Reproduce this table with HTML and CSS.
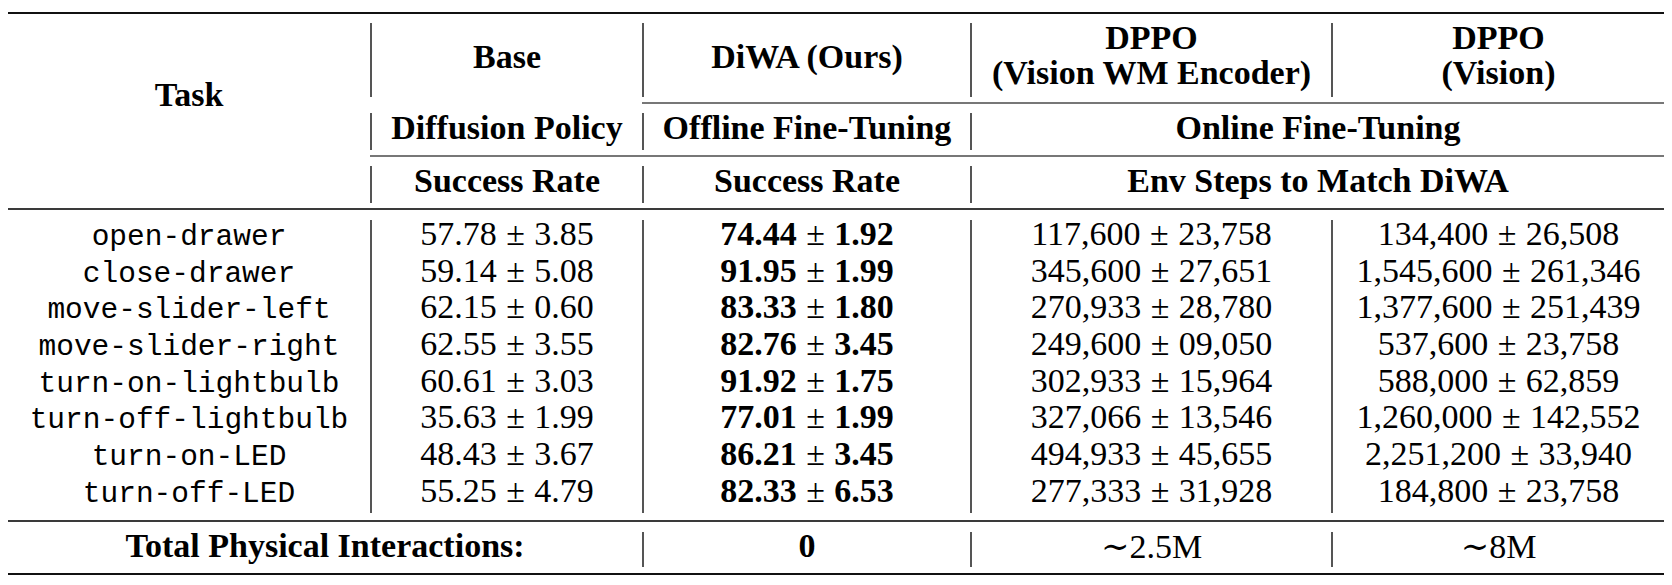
FILE: index.html
```html
<!DOCTYPE html>
<html>
<head>
<meta charset="utf-8">
<link rel="stylesheet" href="styles.css">
</head>
<body>
<div class="table">
  <div class="rule-heavy"></div>
  <div class="cols head">
    <div class="task-h">Task</div>
    <div class="hc r1 c2">Base</div>
    <div class="hc r1 c3">DiWA (Ours)</div>
    <div class="hc r1 c4"><div class="two">DPPO<br>(Vision WM Encoder)</div></div>
    <div class="hc r1 c5"><div class="two">DPPO<br>(Vision)</div></div>
    <div class="cmid cm1"></div>
    <div class="hc r2 c2">Diffusion Policy</div>
    <div class="hc r2 c3">Offline Fine-Tuning</div>
    <div class="hc r2 c45">Online Fine-Tuning</div>
    <div class="cmid cm2"></div>
    <div class="hc r3 c2">Success Rate</div>
    <div class="hc r3 c3">Success Rate</div>
    <div class="hc r3 c45">Env Steps to Match DiWA</div>
  </div>
  <div class="rule-mid"></div>
  <div class="cols body">
    <div class="task">open-drawer</div>
    <div class="c">57.78<span class="pm">±</span>3.85</div>
    <div class="c"><b>74.44</b><span class="pm">±</span><b>1.92</b></div>
    <div class="c">117,600<span class="pm">±</span>23,758</div>
    <div class="c">134,400<span class="pm">±</span>26,508</div>

    <div class="task">close-drawer</div>
    <div class="c">59.14<span class="pm">±</span>5.08</div>
    <div class="c"><b>91.95</b><span class="pm">±</span><b>1.99</b></div>
    <div class="c">345,600<span class="pm">±</span>27,651</div>
    <div class="c">1,545,600<span class="pm">±</span>261,346</div>

    <div class="task">move-slider-left</div>
    <div class="c">62.15<span class="pm">±</span>0.60</div>
    <div class="c"><b>83.33</b><span class="pm">±</span><b>1.80</b></div>
    <div class="c">270,933<span class="pm">±</span>28,780</div>
    <div class="c">1,377,600<span class="pm">±</span>251,439</div>

    <div class="task">move-slider-right</div>
    <div class="c">62.55<span class="pm">±</span>3.55</div>
    <div class="c"><b>82.76</b><span class="pm">±</span><b>3.45</b></div>
    <div class="c">249,600<span class="pm">±</span>09,050</div>
    <div class="c">537,600<span class="pm">±</span>23,758</div>

    <div class="task">turn-on-lightbulb</div>
    <div class="c">60.61<span class="pm">±</span>3.03</div>
    <div class="c"><b>91.92</b><span class="pm">±</span><b>1.75</b></div>
    <div class="c">302,933<span class="pm">±</span>15,964</div>
    <div class="c">588,000<span class="pm">±</span>62,859</div>

    <div class="task">turn-off-lightbulb</div>
    <div class="c">35.63<span class="pm">±</span>1.99</div>
    <div class="c"><b>77.01</b><span class="pm">±</span><b>1.99</b></div>
    <div class="c">327,066<span class="pm">±</span>13,546</div>
    <div class="c">1,260,000<span class="pm">±</span>142,552</div>

    <div class="task">turn-on-LED</div>
    <div class="c">48.43<span class="pm">±</span>3.67</div>
    <div class="c"><b>86.21</b><span class="pm">±</span><b>3.45</b></div>
    <div class="c">494,933<span class="pm">±</span>45,655</div>
    <div class="c">2,251,200<span class="pm">±</span>33,940</div>

    <div class="task">turn-off-LED</div>
    <div class="c">55.25<span class="pm">±</span>4.79</div>
    <div class="c"><b>82.33</b><span class="pm">±</span><b>6.53</b></div>
    <div class="c">277,333<span class="pm">±</span>31,928</div>
    <div class="c">184,800<span class="pm">±</span>23,758</div>
  </div>
  <div class="rule-mid"></div>
  <div class="cols foot">
    <div class="total">Total Physical Interactions:</div>
    <div class="fc"><b>0</b></div>
    <div class="fc"><span class="sim">∼</span>2.5M</div>
    <div class="fc"><span class="sim">∼</span>8M</div>
  </div>
  <div class="rule-heavy"></div>
</div>
</body>
</html>
```

FILE: styles.css
```css
html, body {
  margin: 0;
  background: #fff;
}

body {
  padding: 12px 8px 0;
  font-family: "Liberation Serif", "Times New Roman", serif;
  color: #000;
}

.table {
  width: 1656px;
}

.rule-heavy {
  height: 2px;
  background: #111;
}

.rule-mid {
  height: 2px;
  background: #3a3a3a;
}

.cols {
  display: grid;
  grid-template-columns: 362px 272px 328px 361px 333px;
  text-align: center;
  font-size: 34px;
  line-height: 28px;
}

/* header */
.head {
  grid-template-rows: 88px 2px 51px 2px 51px;
  font-weight: 700;
}

.task-h {
  grid-column: 1;
  grid-row: 1 / 6;
  padding-top: 66.5px;
}

.hc {
  margin: 9px 0 5px;
  border-left: 2px solid #555;
}

.r1 { grid-row: 1; padding-top: 19.5px; }
.r2 { grid-row: 3; padding-top: 1px; }
.r3 { grid-row: 5; padding-top: 0.5px; }

.c2 { grid-column: 2; }
.c3 { grid-column: 3; }
.c4 { grid-column: 4; }
.c5 { grid-column: 5; }
.c45 { grid-column: 4 / 6; }

.r1.c4, .r1.c5 { padding-top: 0; }

.two {
  line-height: 35px;
  margin-top: -3px;
}

.cmid {
  background: #777;
}

.cm1 { grid-row: 2; grid-column: 3 / 6; }
.cm2 { grid-row: 4; grid-column: 2 / 6; }

/* body */
.body {
  padding: 10px 0 6.667px;
  grid-auto-rows: 36.667px;
}

.body .c {
  border-left: 2px solid #555;
}

.task {
  font-family: "Liberation Mono", "Courier New", monospace;
  font-size: 29.5px;
  line-height: 35.5px;
}

.pm {
  font-weight: 400;
  margin: 0 0.28em;
}

b {
  font-weight: 700;
}

/* footer */
.foot {
  grid-template-rows: 51px;
}

.total {
  grid-column: 1 / 3;
  font-weight: 700;
  padding-top: 10px;
}

.fc {
  margin: 10px 0 6px;
  border-left: 2px solid #555;
}

.sim {
  font-family: "DejaVu Serif", serif;
  font-size: 34px;
}
```
